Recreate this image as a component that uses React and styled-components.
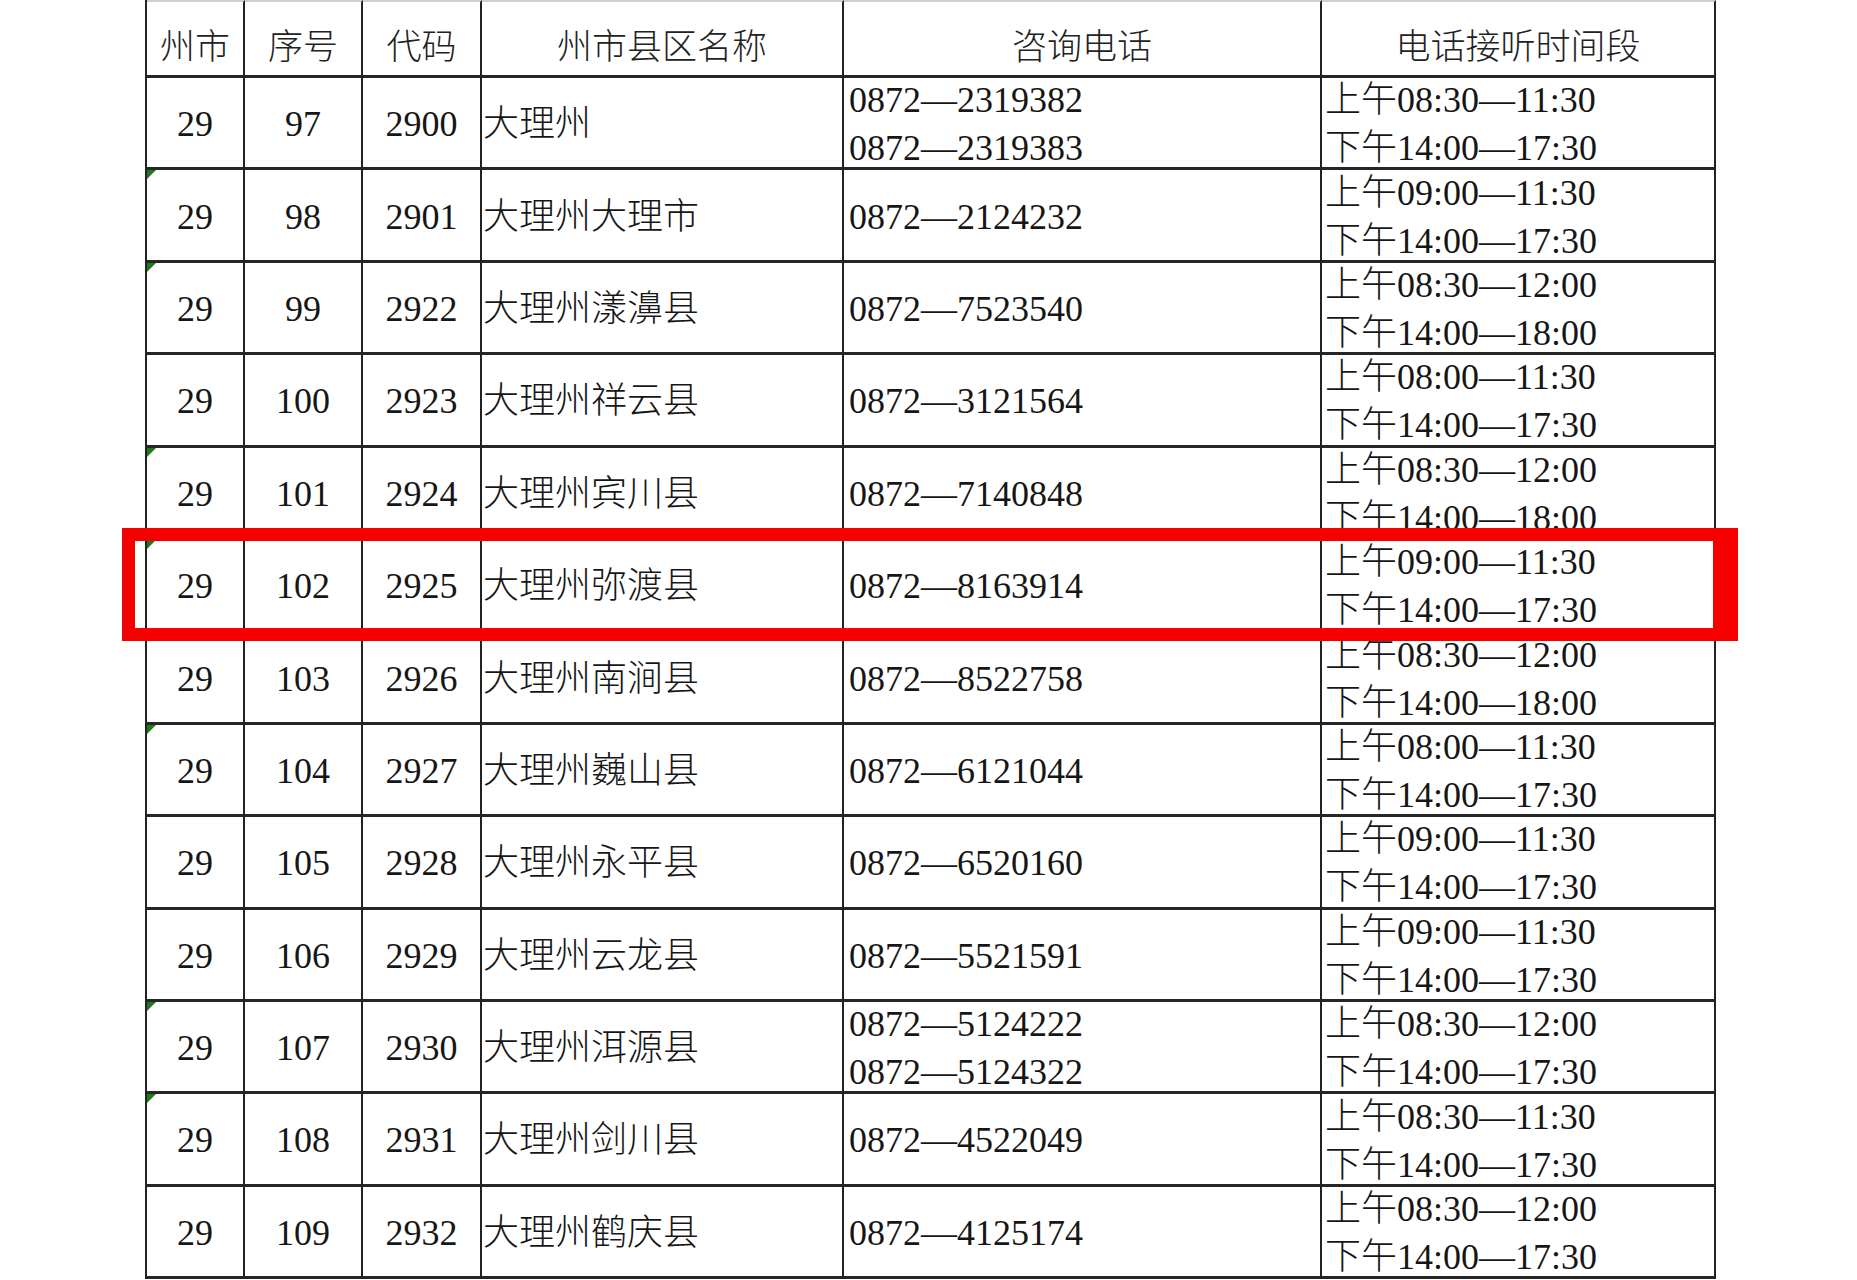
import React from 'react'
import styled, { createGlobalStyle } from 'styled-components'

const GlobalStyle = createGlobalStyle`
  html, body {
    margin: 0;
    padding: 0;
    background: #fff;
  }
  body {
    font-family: "Liberation Serif", "Noto Sans CJK SC", serif;
    font-weight: 300;
    color: #161616;
  }
`

const rows = [
  [97, 2900, '大理州', ['0872—2319382', '0872—2319383'], ['上午08:30—11:30', '下午14:00—17:30'], false],
  [98, 2901, '大理州大理市', ['0872—2124232'], ['上午09:00—11:30', '下午14:00—17:30'], true],
  [99, 2922, '大理州漾濞县', ['0872—7523540'], ['上午08:30—12:00', '下午14:00—18:00'], true],
  [100, 2923, '大理州祥云县', ['0872—3121564'], ['上午08:00—11:30', '下午14:00—17:30'], false],
  [101, 2924, '大理州宾川县', ['0872—7140848'], ['上午08:30—12:00', '下午14:00—18:00'], true],
  [102, 2925, '大理州弥渡县', ['0872—8163914'], ['上午09:00—11:30', '下午14:00—17:30'], true],
  [103, 2926, '大理州南涧县', ['0872—8522758'], ['上午08:30—12:00', '下午14:00—18:00'], false],
  [104, 2927, '大理州巍山县', ['0872—6121044'], ['上午08:00—11:30', '下午14:00—17:30'], true],
  [105, 2928, '大理州永平县', ['0872—6520160'], ['上午09:00—11:30', '下午14:00—17:30'], false],
  [106, 2929, '大理州云龙县', ['0872—5521591'], ['上午09:00—11:30', '下午14:00—17:30'], false],
  [107, 2930, '大理州洱源县', ['0872—5124222', '0872—5124322'], ['上午08:30—12:00', '下午14:00—17:30'], true],
  [108, 2931, '大理州剑川县', ['0872—4522049'], ['上午08:30—11:30', '下午14:00—17:30'], true],
  [109, 2932, '大理州鹤庆县', ['0872—4125174'], ['上午08:30—12:00', '下午14:00—17:30'], false],
]

const headers = ['州市', '序号', '代码', '州市县区名称', '咨询电话', '电话接听时间段']

const App = () => {
  return (
    <Page>
      <GlobalStyle />
      <Frame>
        <Sheet>
          {headers.map((h) => (
            <HeadCell key={h}>{h}</HeadCell>
          ))}
          {rows.map(([no, code, name, phones, times, flagged]) => (
            <React.Fragment key={no}>
              <Cell $align="center">
                {flagged && <ErrorMark />}
                29
              </Cell>
              <Cell $align="center">{no}</Cell>
              <Cell $align="center">{code}</Cell>
              <Cell $align="left" $pad={1}>{name}</Cell>
              <Cell $align="left" $pad={5}>
                <Lines>
                  {phones.map((p) => <span key={p}>{p}</span>)}
                </Lines>
              </Cell>
              <Cell $align="left" $pad={3}>
                <Lines>
                  {times.map((t) => <span key={t}>{t}</span>)}
                </Lines>
              </Cell>
            </React.Fragment>
          ))}
        </Sheet>
        <Highlight />
      </Frame>
    </Page>
  )
}

const Page = styled.div`
  width: 1857px;
  height: 1280px;
  overflow: hidden;
  background: #fff;
`

const Frame = styled.div`
  position: relative;
  width: 1857px;
  height: 1280px;
  padding-left: 145px;
  box-sizing: border-box;
`

const Sheet = styled.div`
  display: grid;
  grid-template-columns: 98px 118px 119px 362px 478px 394px;
  grid-template-rows: 78px repeat(13, 92.4px);
  width: max-content;
  border-left: 2px solid #222;
  box-sizing: border-box;
`

const HeadCell = styled.div`
  box-sizing: border-box;
  border-right: 2px solid #222;
  border-bottom: 3px solid #262626;
  border-top: 2px solid #cfcfcf;
  display: flex;
  align-items: center;
  justify-content: center;
  padding-top: 10px;
  font-size: 35px;
  font-family: "Noto Sans CJK SC", sans-serif;
  font-weight: 300;
  color: #222;
  white-space: nowrap;
`

const Cell = styled.div`
  position: relative;
  box-sizing: border-box;
  border-right: 2px solid #222;
  border-bottom: 3px solid #262626;
  display: flex;
  align-items: center;
  justify-content: ${({ $align }) => ($align === 'center' ? 'center' : 'flex-start')};
  padding-left: ${({ $pad = 0 }) => $pad}px;
  padding-top: 3px;
  font-size: 36px;
  line-height: 48px;
  white-space: nowrap;
`

const Lines = styled.div`
  display: flex;
  flex-direction: column;
  line-height: 48px;
`

const ErrorMark = styled.span`
  position: absolute;
  left: 0;
  top: 0;
  width: 0;
  height: 0;
  border-top: 9px solid #1f7a1f;
  border-right: 9px solid transparent;
`

const Highlight = styled.div`
  position: absolute;
  left: 122px;
  top: 528px;
  width: 1616px;
  height: 113px;
  box-sizing: border-box;
  border: 13px solid #f40000;
  border-right-width: 25px;
  pointer-events: none;
`

export default App
